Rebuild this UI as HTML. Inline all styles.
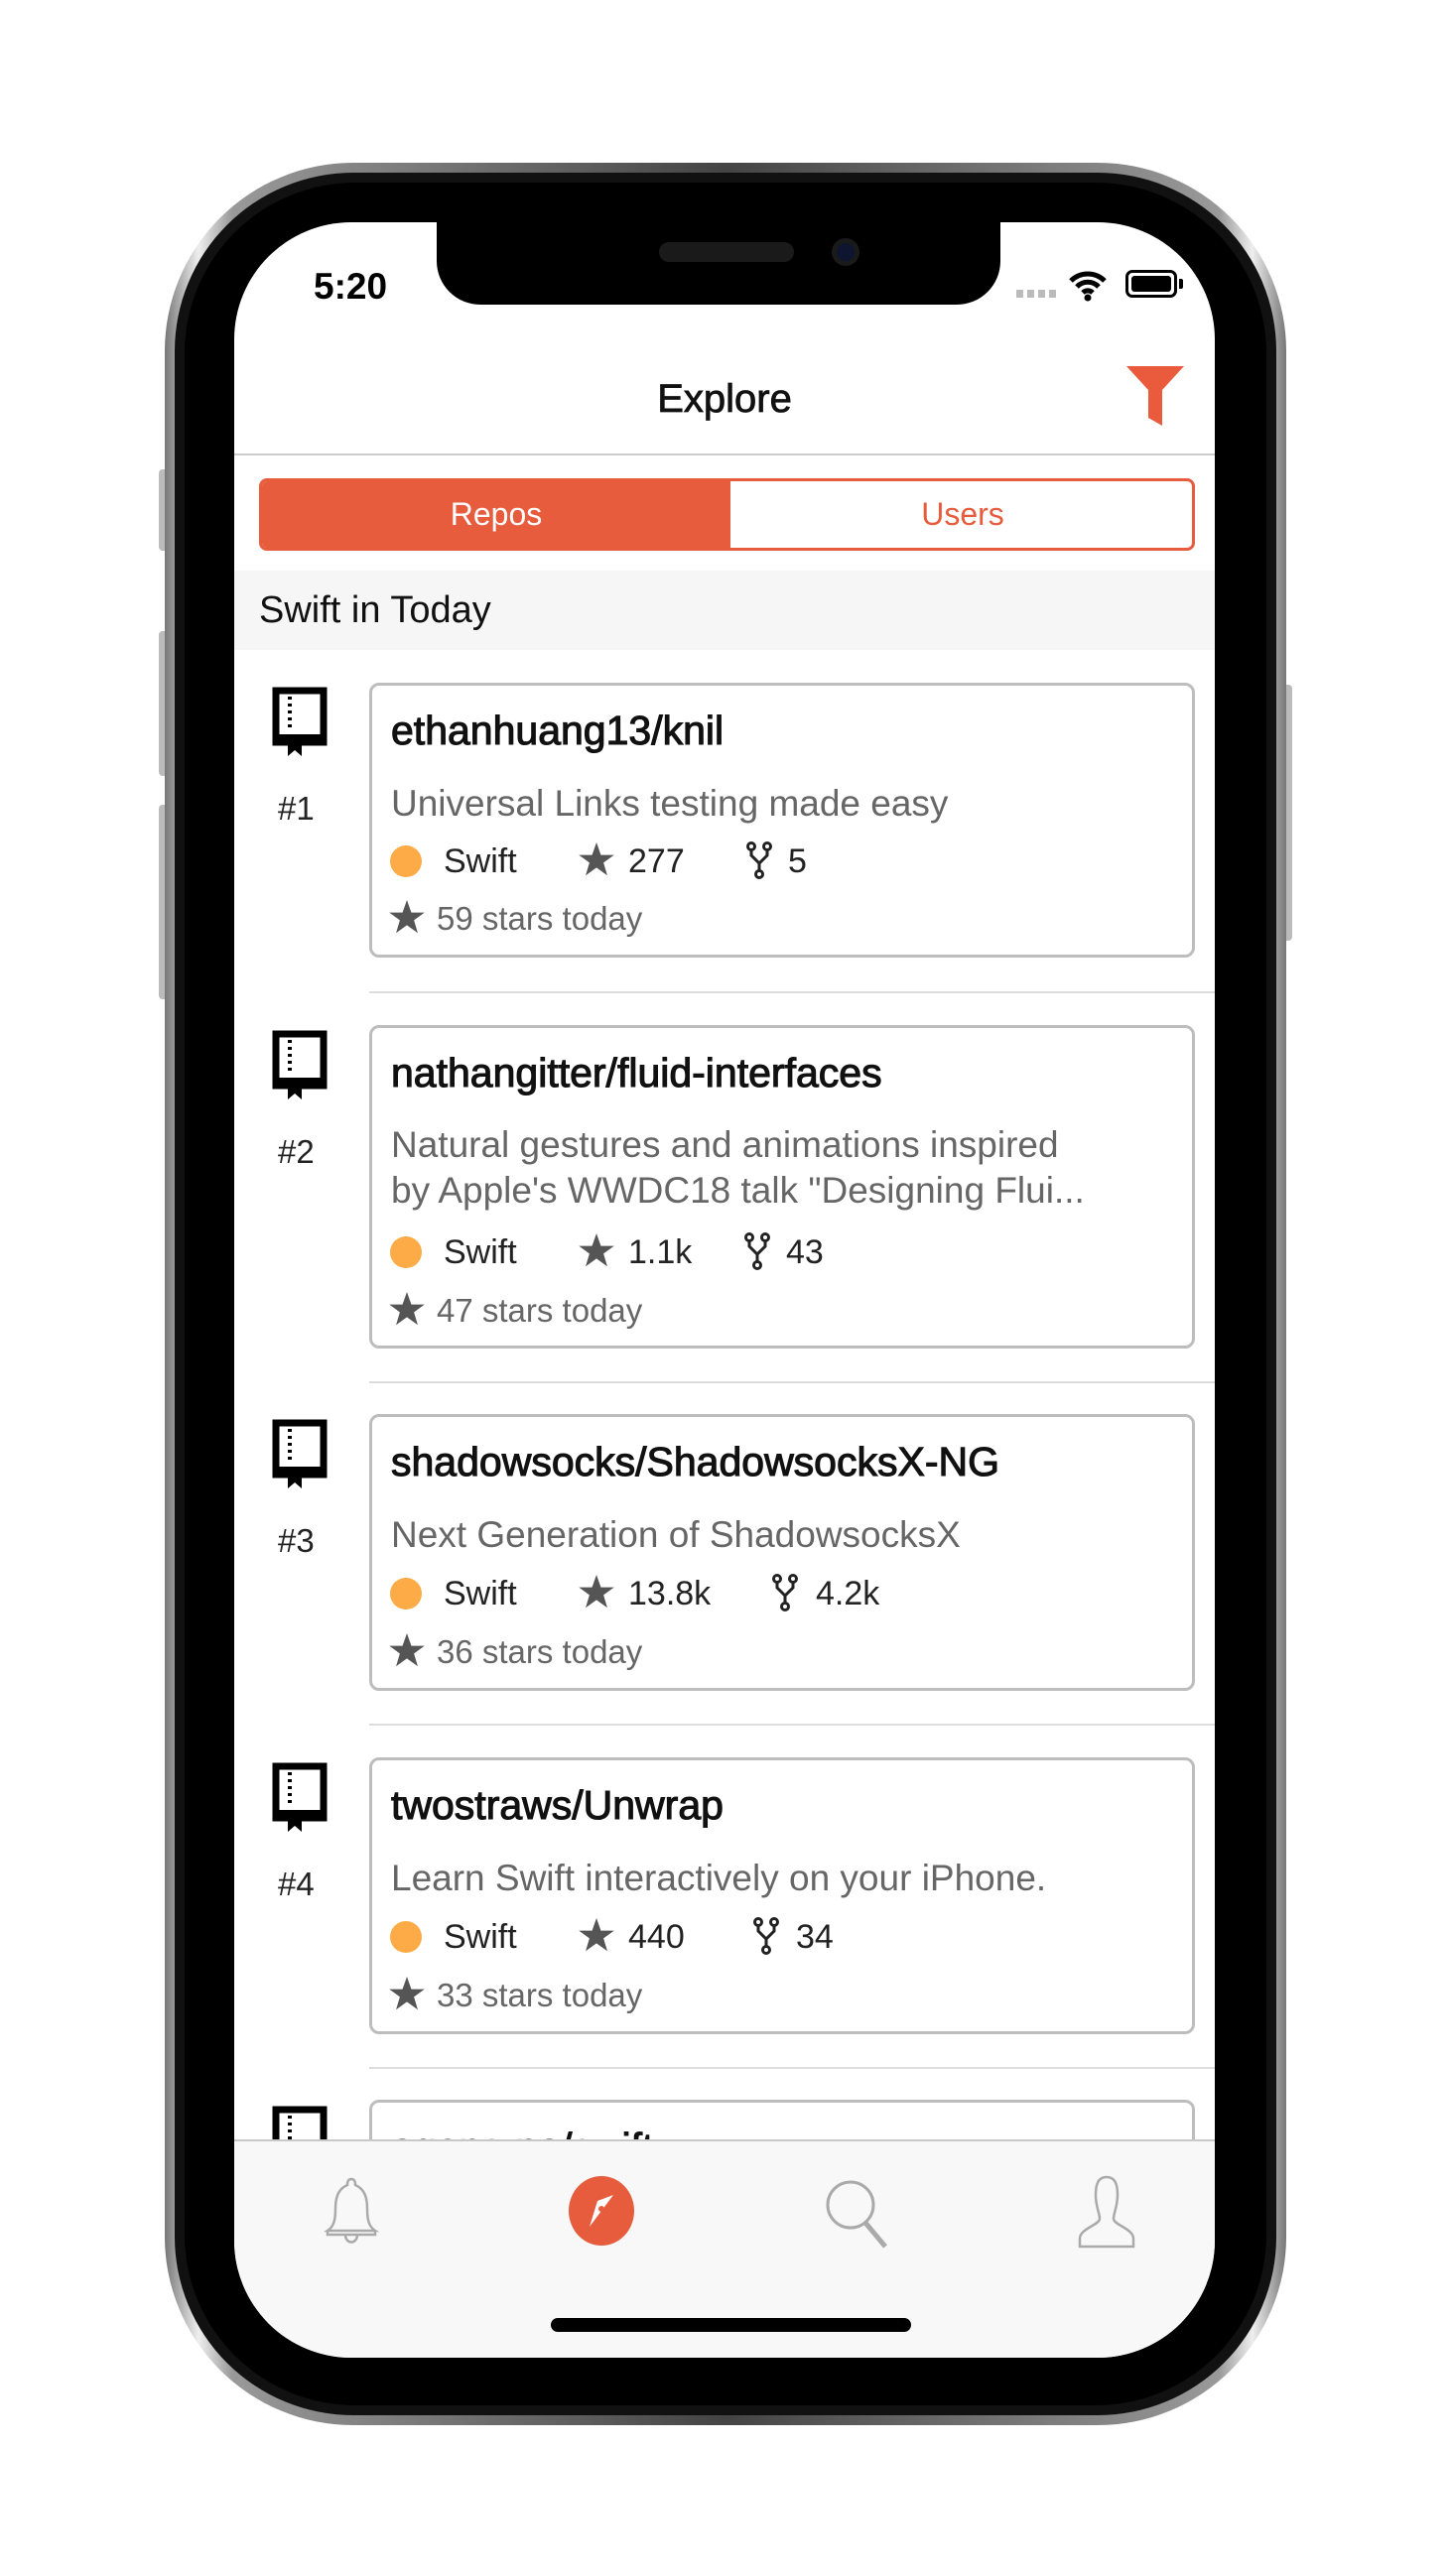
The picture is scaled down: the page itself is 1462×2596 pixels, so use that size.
<!DOCTYPE html>
<html><head><meta charset="utf-8"><style>
*{margin:0;padding:0;box-sizing:border-box}
body{width:1462px;height:2596px;background:#fff;position:relative;overflow:hidden;font-family:"Liberation Sans",sans-serif}
.abs{position:absolute}
.t{position:absolute;white-space:nowrap;line-height:1}
.card{position:absolute;left:372px;width:832px;border:3px solid #bdbdbd;border-radius:10px;background:#fff}
.title{font-size:41px;font-weight:normal;-webkit-text-stroke:1.1px #111;color:#111}
.desc{font-size:37px;color:#666}
.meta{font-size:34px;color:#222}
.today{font-size:33px;color:#666}
.sep{position:absolute;left:372px;width:852px;height:2px;background:#ddd}
.rank{font-size:33px;color:#222}
.book{position:absolute;left:274px;width:56px;height:70px}
</style></head><body>
<div class="abs" style="left:160px;top:473px;width:12px;height:82px;background:#bbb;border-radius:4px"></div>
<div class="abs" style="left:160px;top:636px;width:12px;height:146px;background:#bbb;border-radius:4px"></div>
<div class="abs" style="left:160px;top:811px;width:12px;height:196px;background:#bbb;border-radius:4px"></div>
<div class="abs" style="left:1290px;top:690px;width:12px;height:258px;background:#bbb;border-radius:4px"></div>
<div class="abs" style="left:166px;top:164px;width:1130px;height:2280px;border-radius:190px;background:linear-gradient(90deg,#777,#eee 3%,#999 6%,#444 50%,#999 94%,#eee 97%,#777)"></div>
<div class="abs" style="left:176px;top:174px;width:1110px;height:2260px;border-radius:180px;background:#111"></div>
<div class="abs" style="left:186px;top:184px;width:1090px;height:2240px;border-radius:172px;background:#000"></div>
<div class="abs" style="left:236px;top:224px;width:988px;height:2152px;border-radius:118px;background:#fff;overflow:hidden">
  <div class="abs" style="left:204px;top:-4px;width:568px;height:87px;background:#000;border-radius:0 0 44px 44px"></div>
  <div class="abs" style="left:428px;top:20px;width:136px;height:20px;background:#1a1a1a;border-radius:10px"></div>
  <div class="abs" style="left:602px;top:16px;width:28px;height:28px;background:#0d1530;border-radius:50%;border:5px solid #1a1a1a"></div>
  <div class="t" style="left:80px;top:46px;font-size:37px;font-weight:bold;color:#000">5:20</div>
  <div class="abs" style="left:788px;top:68px;width:42px;height:8px;background:repeating-linear-gradient(90deg,#bbb 0 7px,transparent 7px 11px)"></div>
  <svg class="abs" style="left:840px;top:48px" width="40" height="32" viewBox="0 0 40 32"><path d="M3 11 A24 24 0 0 1 37 11 M9 17 A15 15 0 0 1 31 17 M15 23 A7 7 0 0 1 25 23" stroke="#000" stroke-width="5" fill="none"/><circle cx="20" cy="28" r="3.5"/></svg>
  <div class="abs" style="left:898px;top:48px;width:52px;height:28px;border:3px solid #000;border-radius:7px;padding:3px"><div style="width:100%;height:100%;background:#000;border-radius:3px"></div></div>
  <div class="abs" style="left:952px;top:57px;width:4px;height:10px;background:#000;border-radius:0 2px 2px 0"></div>
  <div class="t" style="left:0;width:988px;text-align:center;top:158px;font-size:40px;color:#111;-webkit-text-stroke:0.8px #111">Explore</div>
  <svg class="abs" style="left:899px;top:145px" width="58" height="60" viewBox="0 0 58 60"><path d="M0 0H58L36 24V60L22 52V24Z" fill="#ea5a3c"/></svg>
  <div class="abs" style="left:0;top:233px;width:988px;height:2px;background:#ccc"></div>
  <div class="abs" style="left:25px;top:258px;width:943px;height:73px;border:3px solid #e85c3e;border-radius:8px;overflow:hidden;background:#fff">
    <div class="abs" style="left:0;top:0;width:472px;height:100%;background:#e85c3e"></div>
    <div class="t" style="left:0;width:472px;text-align:center;top:17px;font-size:32px;color:#fff">Repos</div>
    <div class="t" style="left:472px;width:468px;text-align:center;top:17px;font-size:32px;color:#e85c3e">Users</div>
  </div>
  <div class="abs" style="left:0;top:351px;width:988px;height:80px;background:#f6f6f6"></div>
  <div class="t" style="left:25px;top:372px;font-size:38px;color:#111">Swift in Today</div>
</div>

<svg class="book" style="top:692px" viewBox="0 0 56 70"><path d="M4 4H52V56H4Z" fill="none" stroke="#000" stroke-width="7"/><rect x="4" y="48" width="48" height="10" fill="#000"/><path d="M18 10V44" stroke="#000" stroke-width="4" stroke-dasharray="3 4"/><path d="M16 56H30V70L23 64L16 70Z" fill="#000"/></svg>
<div class="t rank" style="left:280px;top:798px">#1</div>
<div class="card" style="top:688px;height:277px"></div>
<div class="t title" style="left:394px;top:716px">ethanhuang13/knil</div>
<div class="t desc" style="left:394px;top:791px">Universal Links testing made easy</div>
<div class="abs" style="left:393px;top:852px;width:32px;height:32px;border-radius:50%;background:#fdab47"></div>
<div class="t meta" style="left:447px;top:851px">Swift</div>
<svg class="abs" style="left:583px;top:849px" width="36" height="34" viewBox="0 0 24 23"><path d="M12 0L15 8.5H24L16.8 13.8L19.4 22.5L12 17.2L4.6 22.5L7.2 13.8L0 8.5H9Z" fill="#555"/></svg>
<div class="t meta" style="left:633px;top:851px">277</div>
<svg class="abs" style="left:752px;top:848px" width="26" height="38" viewBox="0 0 26 38"><circle cx="5" cy="5" r="3.5" fill="none" stroke="#222" stroke-width="3"/><circle cx="21" cy="5" r="3.5" fill="none" stroke="#222" stroke-width="3"/><circle cx="13" cy="33" r="3.5" fill="none" stroke="#222" stroke-width="3"/><path d="M5 9V14L13 22L21 14V9M13 22V29" fill="none" stroke="#222" stroke-width="3"/></svg>
<div class="t meta" style="left:794px;top:851px">5</div>
<svg class="abs" style="left:392px;top:907px" width="36" height="34" viewBox="0 0 24 23"><path d="M12 0L15 8.5H24L16.8 13.8L19.4 22.5L12 17.2L4.6 22.5L7.2 13.8L0 8.5H9Z" fill="#555"/></svg>
<div class="t today" style="left:440px;top:909px">59 stars today</div>
<div class="sep" style="top:999px"></div>

<svg class="book" style="top:1038px" viewBox="0 0 56 70"><path d="M4 4H52V56H4Z" fill="none" stroke="#000" stroke-width="7"/><rect x="4" y="48" width="48" height="10" fill="#000"/><path d="M18 10V44" stroke="#000" stroke-width="4" stroke-dasharray="3 4"/><path d="M16 56H30V70L23 64L16 70Z" fill="#000"/></svg>
<div class="t rank" style="left:280px;top:1144px">#2</div>
<div class="card" style="top:1033px;height:326px"></div>
<div class="t title" style="left:394px;top:1061px">nathangitter/fluid-interfaces</div>
<div class="t desc" style="left:394px;top:1135px">Natural gestures and animations inspired</div>
<div class="t desc" style="left:394px;top:1181px">by Apple's WWDC18 talk "Designing Flui...</div>
<div class="abs" style="left:393px;top:1246px;width:32px;height:32px;border-radius:50%;background:#fdab47"></div>
<div class="t meta" style="left:447px;top:1245px">Swift</div>
<svg class="abs" style="left:583px;top:1243px" width="36" height="34" viewBox="0 0 24 23"><path d="M12 0L15 8.5H24L16.8 13.8L19.4 22.5L12 17.2L4.6 22.5L7.2 13.8L0 8.5H9Z" fill="#555"/></svg>
<div class="t meta" style="left:633px;top:1245px">1.1k</div>
<svg class="abs" style="left:750px;top:1242px" width="26" height="38" viewBox="0 0 26 38"><circle cx="5" cy="5" r="3.5" fill="none" stroke="#222" stroke-width="3"/><circle cx="21" cy="5" r="3.5" fill="none" stroke="#222" stroke-width="3"/><circle cx="13" cy="33" r="3.5" fill="none" stroke="#222" stroke-width="3"/><path d="M5 9V14L13 22L21 14V9M13 22V29" fill="none" stroke="#222" stroke-width="3"/></svg>
<div class="t meta" style="left:792px;top:1245px">43</div>
<svg class="abs" style="left:392px;top:1302px" width="36" height="34" viewBox="0 0 24 23"><path d="M12 0L15 8.5H24L16.8 13.8L19.4 22.5L12 17.2L4.6 22.5L7.2 13.8L0 8.5H9Z" fill="#555"/></svg>
<div class="t today" style="left:440px;top:1304px">47 stars today</div>
<div class="sep" style="top:1392px"></div>

<svg class="book" style="top:1430px" viewBox="0 0 56 70"><path d="M4 4H52V56H4Z" fill="none" stroke="#000" stroke-width="7"/><rect x="4" y="48" width="48" height="10" fill="#000"/><path d="M18 10V44" stroke="#000" stroke-width="4" stroke-dasharray="3 4"/><path d="M16 56H30V70L23 64L16 70Z" fill="#000"/></svg>
<div class="t rank" style="left:280px;top:1536px">#3</div>
<div class="card" style="top:1425px;height:279px"></div>
<div class="t title" style="left:394px;top:1453px">shadowsocks/ShadowsocksX-NG</div>
<div class="t desc" style="left:394px;top:1528px">Next Generation of ShadowsocksX</div>
<div class="abs" style="left:393px;top:1590px;width:32px;height:32px;border-radius:50%;background:#fdab47"></div>
<div class="t meta" style="left:447px;top:1589px">Swift</div>
<svg class="abs" style="left:583px;top:1587px" width="36" height="34" viewBox="0 0 24 23"><path d="M12 0L15 8.5H24L16.8 13.8L19.4 22.5L12 17.2L4.6 22.5L7.2 13.8L0 8.5H9Z" fill="#555"/></svg>
<div class="t meta" style="left:633px;top:1589px">13.8k</div>
<svg class="abs" style="left:778px;top:1586px" width="26" height="38" viewBox="0 0 26 38"><circle cx="5" cy="5" r="3.5" fill="none" stroke="#222" stroke-width="3"/><circle cx="21" cy="5" r="3.5" fill="none" stroke="#222" stroke-width="3"/><circle cx="13" cy="33" r="3.5" fill="none" stroke="#222" stroke-width="3"/><path d="M5 9V14L13 22L21 14V9M13 22V29" fill="none" stroke="#222" stroke-width="3"/></svg>
<div class="t meta" style="left:822px;top:1589px">4.2k</div>
<svg class="abs" style="left:392px;top:1646px" width="36" height="34" viewBox="0 0 24 23"><path d="M12 0L15 8.5H24L16.8 13.8L19.4 22.5L12 17.2L4.6 22.5L7.2 13.8L0 8.5H9Z" fill="#555"/></svg>
<div class="t today" style="left:440px;top:1648px">36 stars today</div>
<div class="sep" style="top:1737px"></div>

<svg class="book" style="top:1776px" viewBox="0 0 56 70"><path d="M4 4H52V56H4Z" fill="none" stroke="#000" stroke-width="7"/><rect x="4" y="48" width="48" height="10" fill="#000"/><path d="M18 10V44" stroke="#000" stroke-width="4" stroke-dasharray="3 4"/><path d="M16 56H30V70L23 64L16 70Z" fill="#000"/></svg>
<div class="t rank" style="left:280px;top:1882px">#4</div>
<div class="card" style="top:1771px;height:279px"></div>
<div class="t title" style="left:394px;top:1799px">twostraws/Unwrap</div>
<div class="t desc" style="left:394px;top:1874px">Learn Swift interactively on your iPhone.</div>
<div class="abs" style="left:393px;top:1936px;width:32px;height:32px;border-radius:50%;background:#fdab47"></div>
<div class="t meta" style="left:447px;top:1935px">Swift</div>
<svg class="abs" style="left:583px;top:1933px" width="36" height="34" viewBox="0 0 24 23"><path d="M12 0L15 8.5H24L16.8 13.8L19.4 22.5L12 17.2L4.6 22.5L7.2 13.8L0 8.5H9Z" fill="#555"/></svg>
<div class="t meta" style="left:633px;top:1935px">440</div>
<svg class="abs" style="left:759px;top:1932px" width="26" height="38" viewBox="0 0 26 38"><circle cx="5" cy="5" r="3.5" fill="none" stroke="#222" stroke-width="3"/><circle cx="21" cy="5" r="3.5" fill="none" stroke="#222" stroke-width="3"/><circle cx="13" cy="33" r="3.5" fill="none" stroke="#222" stroke-width="3"/><path d="M5 9V14L13 22L21 14V9M13 22V29" fill="none" stroke="#222" stroke-width="3"/></svg>
<div class="t meta" style="left:802px;top:1935px">34</div>
<svg class="abs" style="left:392px;top:1992px" width="36" height="34" viewBox="0 0 24 23"><path d="M12 0L15 8.5H24L16.8 13.8L19.4 22.5L12 17.2L4.6 22.5L7.2 13.8L0 8.5H9Z" fill="#555"/></svg>
<div class="t today" style="left:440px;top:1994px">33 stars today</div>
<div class="sep" style="top:2083px"></div>

<svg class="book" style="top:2122px" viewBox="0 0 56 70"><path d="M4 4H52V56H4Z" fill="none" stroke="#000" stroke-width="7"/><path d="M18 10V44" stroke="#000" stroke-width="4" stroke-dasharray="3 4"/></svg>
<div class="card" style="top:2116px;height:120px"></div>
<div class="t title" style="left:394px;top:2144px">agens-no/swift</div>

<div class="abs" style="left:236px;top:2156px;width:988px;height:220px;background:#f8f8f8;border-top:2px solid #c8c8c8;border-radius:0 0 118px 118px"></div>
<svg class="abs" style="left:326px;top:2192px" width="56" height="72" viewBox="0 0 56 72"><path d="M28 4C24 4 24 8 24 10C14 14 12 24 12 34C12 46 10 52 4 56H52C46 52 44 46 44 34C44 24 42 14 32 10C32 8 32 4 28 4ZM4 56V60H52V56M22 60C22 70 34 70 34 60" fill="none" stroke="#aaa" stroke-width="2.5"/></svg>
<svg class="abs" style="left:572px;top:2192px" width="68" height="72" viewBox="0 0 68 72"><ellipse cx="34" cy="36" rx="33" ry="35" fill="#e85c3e"/><path d="M46 20L22 52L30 26Z" fill="#fff"/><circle cx="34" cy="34" r="3" fill="#e85c3e"/></svg>
<svg class="abs" style="left:830px;top:2194px" width="66" height="72" viewBox="0 0 66 72"><circle cx="27" cy="28" r="23" fill="none" stroke="#aaa" stroke-width="3"/><path d="M42 46L62 70" stroke="#aaa" stroke-width="5"/></svg>
<svg class="abs" style="left:1084px;top:2192px" width="62" height="74" viewBox="0 0 62 74"><path d="M31 2C22 2 20 10 20 20C20 32 24 38 24 44C24 50 4 54 4 64V72H58V64C58 54 38 50 38 44C38 38 42 32 42 20C42 10 40 2 31 2Z" fill="none" stroke="#aaa" stroke-width="2.5"/></svg>
<div class="abs" style="left:555px;top:2336px;width:363px;height:14px;background:#000;border-radius:7px"></div>
</body></html>
